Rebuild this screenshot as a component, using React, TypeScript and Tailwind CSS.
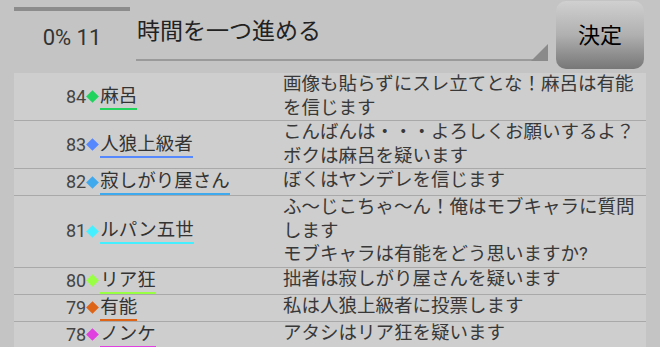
import React from "react";

type Post = {
  no: number;
  name: string;
  color: string;
  lines: string[];
};

const posts: Post[] = [
  { no: 84, name: "麻呂", color: "#1fd35c", lines: ["画像も貼らずにスレ立てとな！麻呂は有能", "を信じます"] },
  { no: 83, name: "人狼上級者", color: "#5587ff", lines: ["こんばんは・・・よろしくお願いするよ？", "ボクは麻呂を疑います"] },
  { no: 82, name: "寂しがり屋さん", color: "#3fa9ee", lines: ["ぼくはヤンデレを信じます"] },
  {
    no: 81,
    name: "ルパン五世",
    color: "#44f0ff",
    lines: ["ふ～じこちゃ～ん！俺はモブキャラに質問", "します", "モブキャラは有能をどう思いますか?"],
  },
  { no: 80, name: "リア狂", color: "#99ff44", lines: ["拙者は寂しがり屋さんを疑います"] },
  { no: 79, name: "有能", color: "#de6418", lines: ["私は人狼上級者に投票します"] },
  { no: 78, name: "ノンケ", color: "#e040e0", lines: ["アタシはリア狂を疑います"] },
];

const PostRow: React.FC<{ post: Post }> = ({ post }) => (
  <div className="flex border-b border-[#a9a9a9]">
    <div className="w-[269px] shrink-0 pl-[52px] flex items-center">
      <span className="text-[18px] leading-[24px] text-[#444]">{post.no}</span>
      <span
        className="inline-block w-[9px] h-[9px] shrink-0 rotate-45 mx-[2px]"
        style={{ backgroundColor: post.color }}
      />
      <span
        className="text-[18.5px] leading-[24px] text-[#333] border-b-2 ml-[1px]"
        style={{ borderColor: post.color }}
      >
        {post.name}
      </span>
    </div>
    <div className="flex-1 pr-[3px] text-[18.5px] leading-[23.5px] text-[#383838]">
      {post.lines.map((l, i) => (
        <div key={i}>{l}</div>
      ))}
    </div>
  </div>
);

export default function App() {
  return (
    <div
      className="w-[660px] h-[347px] overflow-hidden bg-[#c4c4c4]"
      style={{ fontFamily: "Roboto, 'Noto Sans CJK JP', sans-serif" }}
    >
      <div className="flex h-[73px]">
        <div className="ml-[14px] w-[116px] flex flex-col">
          <div className="mt-[7px] h-[4px] bg-[#8c8c8c]" />
          <div className="mt-[14px] text-center text-[22px] leading-[26px] text-[#333]">0% 11</div>
        </div>
        <div className="ml-[6px] w-[412px] relative">
          <div className="pt-[17px] pl-[1px] text-[23px] leading-[30px] text-[#222]">時間を一つ進める</div>
          <div className="absolute left-0 right-0 top-[59px] h-[2px] bg-[#9a9a9a]" />
          <svg className="absolute right-0 top-[44px]" width="17" height="17" viewBox="0 0 17 17">
            <polygon points="17,0 17,17 0,17" fill="#8a8a8a" />
          </svg>
        </div>
        <div className="ml-[8px] mt-[1px] w-[88px] h-[68px] rounded-[10px] bg-gradient-to-b from-[#d0d0d0] via-[#b0b0b0] to-[#777777] flex items-center justify-center text-[22px] text-black">
          決定
        </div>
      </div>
      <div className="ml-[14px] w-[632px] bg-[#cecece]">
        {posts.map((p) => (
          <PostRow key={p.no} post={p} />
        ))}
      </div>
    </div>
  );
}
